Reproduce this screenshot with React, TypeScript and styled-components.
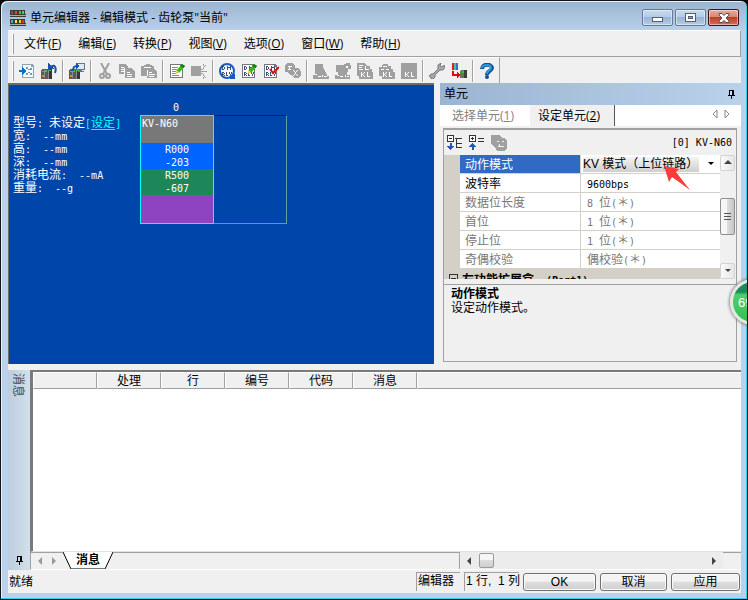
import React from "react";
import styled, { createGlobalStyle, css } from "styled-components";

const UI = `"Open Sans", "Noto Sans CJK SC", sans-serif`;
const CJK = `"Noto Sans CJK SC", sans-serif`;
const MONO = `"DejaVu Sans Mono", "Noto Sans CJK SC", monospace`;

const GlobalStyle = createGlobalStyle`
  * { box-sizing: border-box; }
  body { margin: 0; background: #000; }
  button, select { font: inherit; color: inherit; border: 0; padding: 0; margin: 0; background: none; }
`;

/* ---------- window frame ---------- */

const Window = styled.div`
  position: relative;
  display: flex;
  flex-direction: column;
  min-height: 100vh;
  padding: 0 6px 6px 7px;
  overflow: hidden;
  border: 1px solid #10131a;
  border-radius: 7px 7px 0 0;
  background: linear-gradient(#9ab4d1 0, #b9d1ea 30px, #b9d1ea 100%);
  box-shadow: inset -1px -1px 0 #2fd0ea, inset 1px 1px 0 #e9f3fc;
  font-family: ${UI};
  font-size: 12px;
  line-height: 16px;
  color: #000;
`;

const TitleBar = styled.header`
  display: flex;
  align-items: center;
  height: 29px;
  padding: 4px 2px 0 2px;
  gap: 4px;
`;

const Title = styled.h1`
  flex: 1;
  margin: 0;
  font-size: 12px;
  font-weight: 400;
  line-height: 18px;
`;

const CaptionButtons = styled.div`
  display: flex;
  gap: 2px;
`;

const CaptionButton = styled.button<{ $close?: boolean }>`
  display: grid;
  place-items: center;
  width: 31px;
  height: 17px;
  border: 1px solid ${(p) => (p.$close ? "#43131b" : "#64789a")};
  border-radius: 2px;
  background: ${(p) =>
    p.$close
      ? "linear-gradient(#e9a99c 0, #d98877 45%, #bd3f27 50%, #d0705a 100%)"
      : "linear-gradient(#c6d9ed 0, #b6cde5 45%, #98b4d3 50%, #b3cde8 100%)"};
  box-shadow: inset 0 0 0 1px rgba(255, 255, 255, 0.45);
`;

const Client = styled.div`
  flex: 1;
  display: flex;
  flex-direction: column;
  background: #f0f0f0;
`;

/* ---------- menu and toolbar ---------- */

const MenuBar = styled.nav`
  display: flex;
  align-items: center;
  height: 27px;
  padding-left: 4px;
  gap: 17px;
  border-top: 1px solid #fff;
  border-right: 1px solid #a0a0a0;
  border-bottom: 1px solid #a0a0a0;
`;

const Grip = styled.span`
  width: 2px;
  height: 20px;
  border-right: 1px solid #a0a0a0;
  border-left: 1px solid #fff;
`;

const MenuItem = styled.button`
  line-height: 18px;
  white-space: nowrap;
  &:first-of-type { margin-left: -7px; }
`;

const ToolBar = styled.div`
  display: flex;
  align-items: center;
  align-self: flex-start;
  height: 26px;
  padding: 0 1px 0 4px;
  border-top: 1px solid #fff;
  border-right: 1px solid #a0a0a0;
`;

const ToolGrip = styled(Grip)`
  margin-right: 2px;
`;

const ToolButton = styled.button`
  display: grid;
  place-items: center;
  width: 22px;
  height: 22px;
`;

const ToolSeparator = styled.span`
  width: 2px;
  height: 22px;
  margin: 0 2px;
  border-left: 1px solid #a0a0a0;
  border-right: 1px solid #fff;
`;

/* ---------- unit canvas ---------- */

const Work = styled.div`
  display: flex;
  gap: 6px;
`;

const Canvas = styled.section`
  flex: 1;
  display: flex;
  align-items: flex-start;
  gap: 19px;
  padding: 16px 4px;
  border-top: 2px solid #6d6d6d;
  border-left: 1px solid #6d6d6d;
  background: #0046aa;
  color: #fff;
`;

const Specs = styled.div`
  width: 108px;
  padding-top: 14px;
  font-family: ${CJK};
  line-height: 13px;
  white-space: pre;
`;

const SpecLine = styled.div`
  height: 13px;
`;

const Small = styled.span`
  font-family: ${MONO};
  font-size: 10px;
  line-height: 10px;
`;

const SpecLink = styled.a`
  color: #0ff;
  text-underline-offset: 2px;
`;

const Rack = styled.div`
  flex: 0 1 147px;
  font-family: ${MONO};
  font-size: 10px;
  line-height: 13px;
`;

const SlotNumber = styled.div`
  width: 72px;
  height: 14px;
  text-align: center;
`;

const Slots = styled.div`
  display: flex;
  height: 109px;
`;

const UnitSlot = styled.div`
  display: flex;
  flex-direction: column;
  width: 74px;
  border: 1px solid #0ff;
`;

const EmptySlot = styled.div`
  flex: 1;
  border: solid #5f9ea0;
  border-width: 1px 1px 1px 0;
  border-top-color: #222;
`;

const UnitBlock = styled.div<{ $bg: string; $size: number; $left?: boolean }>`
  height: ${(p) => p.$size}px;
  padding: ${(p) => (p.$left ? "1px" : "0")};
  text-align: ${(p) => (p.$left ? "left" : "center")};
  background: ${(p) => p.$bg};
`;

/* ---------- unit pane ---------- */

const Pane = styled.aside`
  width: 301px;
  display: flex;
  flex-direction: column;
  padding-bottom: 2px;
`;

const PaneHeader = styled.h2`
  display: flex;
  align-items: center;
  justify-content: space-between;
  height: 22px;
  margin: 0;
  padding: 0 6px 0 4px;
  background: linear-gradient(90deg, #9ab4d2, #b9d1ea);
  font-size: 12px;
  font-weight: 400;
`;

const TabRow = styled.div`
  display: flex;
  height: 21px;
  background: #fff;
`;

const Tab = styled.button<{ $active?: boolean }>`
  width: ${(p) => (p.$active ? 85 : 90)}px;
  padding-right: ${(p) => (p.$active ? 6 : 4)}px;
  color: ${(p) => (p.$active ? "#000" : "#808080")};
  ${(p) =>
    p.$active &&
    css`
      background: #f0f0f0;
      border-right: 1px solid #555;
    `}
`;

const TabArrows = styled.div`
  display: flex;
  flex: 1;
  align-items: center;
  justify-content: flex-end;
  gap: 2px;
  padding: 0 9px 4px 0;
`;

const ArrowButton = styled.button`
  display: grid;
  place-items: center;
  width: 10px;
  height: 12px;
`;

const PaneBody = styled.div`
  flex: 1;
  display: flex;
  flex-direction: column;
  margin: 2px 4px 0 3px;
  border: 1px solid #a0a0a0;
  border-top: 2px solid #a0a0a0;
`;

const PaneTools = styled.div`
  display: flex;
  align-items: center;
  height: 25px;
  padding: 0 4px 0 0;
`;

const UnitName = styled.span`
  margin-left: auto;
  font-family: ${MONO};
  font-size: 10px;
`;

const GridArea = styled.div`
  display: flex;
  height: 124px;
`;

const GridClip = styled.div`
  flex: 1;
  overflow: hidden;
  padding-left: 16px;
  background: #d4d0c8;
`;

const PropTable = styled.table`
  width: 100%;
  table-layout: fixed;
  border-collapse: separate;
  border-spacing: 0;
  font-family: ${CJK};
`;

const PropRow = styled.tr<{ $muted?: boolean }>`
  height: 19px;
  background: #fff;
  color: ${(p) => (p.$muted ? "#787878" : "#000")};
`;

const PropName = styled.th<{ $selected?: boolean }>`
  width: 121px;
  height: 19px;
  padding: 0 0 0 5px;
  border-right: 1px solid #d4d0c8;
  border-bottom: 1px solid #d4d0c8;
  font-weight: 400;
  text-align: left;
  line-height: 16px;
  ${(p) =>
    p.$selected &&
    css`
      background: #316ac5;
      color: #fff;
    `}
`;

const PropValue = styled.td<{ $editing?: boolean }>`
  height: 19px;
  padding: ${(p) => (p.$editing ? "0 0 0 2px" : "0 0 0 6px")};
  border-bottom: 1px solid #d4d0c8;
  line-height: 16px;
  white-space: pre;
`;

const SelectBox = styled.label`
  display: flex;
  align-items: center;
  justify-content: space-between;
  padding-right: 5px;
`;

const ModeSelect = styled.select`
  appearance: none;
  width: 116px;
  height: 15px;
  background: linear-gradient(#f4f4f4, #cfcfcf);
  font-family: "Liberation Sans", "Noto Sans CJK SC", sans-serif;
  font-size: 12px;
  line-height: 15px;
`;

const Category = styled.div`
  display: flex;
  align-items: center;
  gap: 4px;
  height: 19px;
  margin-left: -11px;
  font-family: ${CJK};
  font-weight: 700;
  white-space: pre;
`;

const VScroll = styled.div`
  display: flex;
  flex-direction: column;
  width: 16px;
  background: #f0f0f0;
`;

const ScrollButton = styled.button`
  display: grid;
  place-items: center;
  width: 15px;
  height: 16px;
  border: 1px solid #d2d2d2;
  border-radius: 2px;
  background: linear-gradient(90deg, #fafafa, #e6e6e6);
`;

const VThumb = styled.div`
  display: grid;
  place-items: center;
  width: 15px;
  height: 37px;
  margin: 27px 0 auto;
  border: 1px solid #8e8e8e;
  border-radius: 2px;
  background: linear-gradient(90deg, #f6f6f6 0 45%, #dcdcdc 50%, #c6c6c6);
`;

const Description = styled.div`
  flex: 1;
  min-height: 77px;
  margin-top: 5px;
  padding: 1px 7px;
  border-top: 1px solid #a0a0a0;
  font-family: ${CJK};
  line-height: 14px;
`;

const DescriptionTitle = styled.strong`
  display: block;
`;

/* ---------- message list ---------- */

const Messages = styled.section`
  flex: 1;
  display: flex;
  margin-top: 6px;
`;

const SideStrip = styled.div`
  display: flex;
  flex-direction: column;
  align-items: center;
  justify-content: space-between;
  width: 22px;
  padding: 3px 0 5px;
  background: linear-gradient(90deg, #bccddf, #d3dfeb);
  color: #404a58;
`;

const SideTitle = styled.span`
  writing-mode: vertical-rl;
  text-orientation: sideways;
  font-family: ${CJK};
`;

const MessagePane = styled.div`
  flex: 1;
  display: flex;
  flex-direction: column;
  border-top: 2px solid #7a7a7a;
`;

const MessageList = styled.div`
  flex: 1;
  background: #fff;
  border-left: 3px solid #7a7a7a;
  border-bottom: 1px solid #e3e3e3;
`;

const MessageTable = styled.table`
  width: 100%;
  table-layout: fixed;
  border-collapse: separate;
  border-spacing: 0;
  font-family: ${CJK};
`;

const HeadCell = styled.th<{ $rest?: boolean }>`
  width: ${(p) => (p.$rest ? "auto" : "64px")};
  height: 17px;
  padding: 0 0 1px;
  background: #f0f0f0;
  border-top: 1px solid #fff;
  border-left: 1px solid #fff;
  border-bottom: 1px solid #a0a0a0;
  border-right: ${(p) => (p.$rest ? 0 : 1)}px solid #a0a0a0;
  font-weight: 400;
  line-height: 14px;
`;

const SheetBar = styled.div`
  display: flex;
  height: 18px;
  border-left: 1px solid #a0a0a0;
  border-bottom: 1px solid #fff;
`;

const SheetNav = styled.div`
  display: flex;
  align-items: center;
  gap: 4px;
  width: 32px;
  padding-left: 4px;
  border-top: 1px solid #a0a0a0;
`;

const SheetTab = styled.button`
  display: flex;
  height: 17px;
`;

const SheetLabel = styled.span`
  width: 34px;
  height: 17px;
  background: #fff;
  border-bottom: 1px solid #777;
  font-family: ${CJK};
  font-weight: 700;
  line-height: 14px;
`;

const SheetFill = styled.div`
  flex: 1;
  border-top: 1px solid #a0a0a0;
  border-right: 1px solid #a0a0a0;
`;

const HScroll = styled.div`
  display: flex;
  align-items: center;
  width: 262px;
  margin-left: 1px;
  padding: 0 4px 0 3px;
  background: #ececec;
`;

const HThumb = styled.div`
  width: 15px;
  height: 15px;
  margin: 0 auto 0 5px;
  border: 1px solid #9a9a9a;
  border-radius: 2px;
  background: linear-gradient(#f6f6f6 0 45%, #dcdcdc 50%, #cfcfcf);
`;

const SheetEnd = styled.div`
  width: 18px;
  border-top: 1px solid #a0a0a0;
`;

/* ---------- status bar ---------- */

const StatusBar = styled.footer`
  display: flex;
  align-items: center;
  gap: 4px;
  height: 23px;
  padding: 0 1px;
  font-family: "Liberation Sans", "Noto Sans CJK SC", sans-serif;
`;

const StatusText = styled.span`
  flex: 1;
`;

const StatusCell = styled.span<{ $width: number }>`
  width: ${(p) => p.$width}px;
  height: 19px;
  padding-left: 1px;
  border-top: 1px solid #a0a0a0;
  border-left: 1px solid #a0a0a0;
  line-height: 17px;
  white-space: pre;
`;

const PushButton = styled.button<{ $width: number }>`
  width: ${(p) => p.$width}px;
  height: 18px;
  border: 1px solid #707070;
  border-radius: 3px;
  background: linear-gradient(#f3f3f3 0 45%, #dedede 50%, #cfcfcf);
  box-shadow: inset 0 0 0 1px #fafafa;
  line-height: 14px;
`;

/* ---------- overlays ---------- */

const Pointer = styled.svg`
  position: absolute;
  top: 165px;
  right: 55px;
`;

const Badge = styled.div`
  position: absolute;
  top: 278px;
  right: -29px;
  width: 46px;
  height: 46px;
  padding: 13px 0 0 5px;
  border: 3px solid #e4e8e4;
  border-radius: 50%;
  background: linear-gradient(#1d8a5c 0 25%, #4fd069 32%, #35bd55);
  box-shadow: 0 0 3px 1px #888;
  color: #fff;
  font-family: "Liberation Sans", sans-serif;
  font-size: 13px;
  line-height: 15px;
`;

/* ---------- icons ---------- */

const Icon = ({ children, w = 16, h = 16 }: { children: React.ReactNode; w?: number; h?: number }) => (
  <svg width={w} height={h} viewBox={`0 0 ${w} ${h}`} fill="none" shapeRendering="crispEdges" aria-hidden="true">
    {children}
  </svg>
);

const PlcBody = () => (
  <>
    <path d="M0 7l1-1h10v9l-1 1H0z" fill="#5a5a5a" />
    <path d="M3 7h1v8H3zM7 7h1v9H7z" fill="#8c8c8c" />
    <path d="M8 6h3v9l-1 1H8z" fill="#363636" />
    <path d="M1 8h2v1H1zM4 7h2v2H4zM8 7h2v1H8z" fill="#2fd02f" />
    <path d="M1 12h2v2H1z" fill="#e88419" />
  </>
);

/** Two rows of tiny device-name marks, "DM" over "RLY". */
const DeviceMarks = () => (
  <path
    d="M3 3h1v4H3zM4 3h1v1H4zM4 6h1v1H4zM5 4h1v2H5zM8 3h1v4H8zM9 4h1v1H9zM10 4h1v1h-1zM11 3h1v4h-1zM3 9h1v4H3zM4 9h1v1H4zM5 10h1v1H5zM4 11h1v1H4zM5 12h1v1H5zM7 9h1v4H7zM8 12h1v1H8zM10 9h1v2h-1zM12 9h1v2h-1zM11 11h1v2h-1z"
    fill="#3c5078"
  />
);

const Sheet = () => (
  <>
    <path d="M1 1h11l2 2v12H1z" fill="#777" />
    <path d="M2 2h9v2h2v10H2z" fill="#fff" />
  </>
);

const Pencil = () => (
  <g shapeRendering="auto">
    <path d="M7.500 7.500L13 1l3 2-5.500 6.500z" fill="#35b51f" />
    <path d="M13 1l3 2-1.500 2-3-2z" fill="#157a12" />
    <path d="M7.500 7.500l3 2L6.500 11z" fill="#e8c840" />
  </g>
);

const G = "#a0a0a0";

const KlPanel = ({ variant }: { variant: number }) => (
  <Icon>
    {variant === 0 && (
      <>
        <path d="M2 1h8v4h1v2h1v2h1v2h1v2h2v3H0v-4h2z" fill={G} />
        <path d="M2 11h2v1H2zM5 13h3v1H5zM9 12h1v2H9zM11 13h3v1h-3z" fill="#fff" />
      </>
    )}
    {variant === 1 && (
      <>
        <path d="M1 2h8V1h2V0h4v2h1v4h-3v3h-1v3h3v4H0v-4h3V9H1z" fill={G} />
        <path d="M11 3h2v2h-2zM2 12h2v1H2zM5 13h3v1H5zM10 12h1v2h-1zM12 13h2v1h-2z" fill="#fff" />
      </>
    )}
    {variant === 2 && <path d="M0 0h8l2 3h3v3h2v3h1v7H2v-3H0z" fill={G} />}
    {variant === 3 && <path d="M4 1h5v2h3v3h2v3h2v7H3v-3H0V4h3z" fill={G} />}
    {variant === 4 && <path d="M0 0h16v16H0z" fill={G} />}
    {variant > 1 && (
      <path
        d="M4 9h1v5H4zM5 11h1v1H5zM6 10h1v1H6zM7 9h1v1H7zM6 12h1v1H6zM7 13h1v1H7zM10 9h1v5h-1zM11 13h2v1h-2z"
        fill="#fff"
      />
    )}
    {variant === 2 && <path d="M2 2h4v1H2zM2 4h3v1H2zM2 6h4v1H2zM8 3h1v4H8zM9 6h3v1H9z" fill="#fff" />}
    {variant === 3 && <path d="M4 3h4v1H4zM2 6h3v1H2zM7 6h3v1H7z" fill="#fff" />}
  </Icon>
);

const tools: Array<Array<[string, React.ReactNode]>> = [
  [
    [
      "导入",
      <Icon>
        <path d="M3 1h10l2 2v12H3z" fill="#8ba3b2" />
        <path d="M4 2h8v2h2v10H4z" fill="#f4f9fc" />
        <path d="M7 4h2v2H7zM11 5h2v2h-2zM7 10h2v2H7zM11 10h2v2h-2zM9 6h2v1H9zM9 9h2v1H9z" fill="#7d95a4" />
        <path d="M0 7h3V4h1v1h1v1h1v1h1v2H6v1H5v1H4v1H3V9H0z" fill="#0870c4" />
      </Icon>,
    ],
    [
      "撤消",
      <Icon>
        <PlcBody />
        <path d="M10 4c3-3 6 0 4 6" stroke="#1552a8" strokeWidth="2" shapeRendering="auto" />
        <path d="M7 0v6h6z" fill="#1552a8" />
      </Icon>,
    ],
  ],
  [
    [
      "传送",
      <Icon>
        <PlcBody />
        <path d="M7 0h9v7H7z" fill="#657488" />
        <path d="M8 1h7v5H8z" fill="#dcecf6" />
        <path d="M10 7h3v1h-3zM9 8h6v1H9z" fill="#657488" />
        <path d="M4 8c0-4 1-5 4-5" stroke="#1552a8" strokeWidth="2" shapeRendering="auto" />
        <path d="M7 0l4 3-4 3z" fill="#1552a8" />
      </Icon>,
    ],
  ],
  [
    [
      "剪切",
      <Icon>
        <g stroke={G} strokeWidth="2" shapeRendering="auto">
          <path d="M4 0l6 11M12 0L6 11" />
          <circle cx="5" cy="13" r="2" />
          <circle cx="11" cy="13" r="2" />
        </g>
      </Icon>,
    ],
    [
      "复制",
      <Icon>
        <path d="M0 1h6l3 3v7H0zM6 5h6l4 4v6H6z" fill={G} />
        <path d="M2 4h3v1H2zM2 6h3v1H2zM2 8h3v1H2zM8 9h3v1H8zM8 11h5v1H8zM8 13h5v1H8zM5 5h1v6H5z" fill="#fff" />
      </Icon>,
    ],
    [
      "粘贴",
      <Icon>
        <path d="M0 3h3V2h2V1h4v1h2v1h2v3l3 3v6H6v-2H0z" fill={G} />
        <path d="M3 4h7v1H3zM6 7h1v6H6zM8 9h3v1H8zM8 11h6v1H8zM8 13h5v1H8z" fill="#fff" />
      </Icon>,
    ],
  ],
  [
    [
      "编辑",
      <Icon>
        <Sheet />
        <path d="M3 4h6v1H3zM3 6h5v1H3zM3 8h4v1H3zM3 10h4v1H3zM3 12h7v1H3z" fill="#8a8a8a" />
        <Pencil />
      </Icon>,
    ],
    [
      "展开",
      <Icon>
        <path d="M0 3h10v10H0z" fill={G} />
        <path
          d="M10 8h6v1h-6zM10 6h2v1h-2zM12 4h1v2h-1zM13 3h1v1h-1zM14 2h1v1h-1zM10 10h2v1h-2zM12 11h1v2h-1zM13 13h1v1h-1zM14 14h1v1h-1zM12 1h1v2h-1zM12 14h1v2h-1z"
          fill={G}
        />
      </Icon>,
    ],
  ],
  [
    [
      "软元件刷新",
      <Icon>
        <circle cx="8" cy="8" r="7" stroke="#1858c8" strokeWidth="2" fill="#f4f6fa" shapeRendering="auto" />
        <DeviceMarks />
        <path d="M10 16h6v-6z" fill="#1858c8" />
      </Icon>,
    ],
    [
      "软元件编辑",
      <Icon>
        <Sheet />
        <DeviceMarks />
        <Pencil />
      </Icon>,
    ],
    [
      "软元件检查",
      <Icon>
        <Sheet />
        <DeviceMarks />
        <path d="M7 6l3 4 6-6" stroke="#e00808" strokeWidth="2" shapeRendering="auto" />
      </Icon>,
    ],
    [
      "软元件清除",
      <Icon>
        <path d="M2 0h6l2 3v2h3l2 2v1h1v4l-3 3H9l-2-3H5L2 9H0V3z" fill={G} />
        <path d="M3 3h4v1H3zM3 6h3v1H3zM4 4h1v2H4zM8 7h1v1H8zM9 8h1v1H9zM10 9h1v2h-1zM11 8h1v1h-1zM12 7h1v1h-1zM9 11h1v1H9zM11 11h1v1h-1zM8 12h1v1H8zM12 12h1v1h-1z" fill="#fff" />
      </Icon>,
    ],
  ],
  [
    ["监视", <KlPanel variant={0} />],
    ["监视切换", <KlPanel variant={1} />],
    ["KL 读取", <KlPanel variant={2} />],
    ["KL 传送", <KlPanel variant={3} />],
    ["KL", <KlPanel variant={4} />],
  ],
  [
    [
      "设置",
      <Icon>
        <g shapeRendering="auto">
          <path
            d="M12 0L9 2v4l-5 5H2l-2 2 2 1v2h2l2-2v-2l5-5h3l2-3-1-2-2 2-2-1z"
            fill="#a8a8b0"
            stroke="#77777f"
          />
        </g>
      </Icon>,
    ],
    [
      "配线",
      <Icon>
        <path d="M1 0h2v7H1z" fill="#e02020" />
        <path d="M3 0h2v7H3z" fill="#38c8a8" />
        <path d="M5 0h2v7H5z" fill="#4468c0" />
        <path d="M1 8h2v3h3V9h1v1h1v1h1v2H8v1H7v1H6v-2H1z" fill="#e00808" />
        <path d="M9 8l1-1h6v8H9z" fill="#6a7460" />
        <path d="M13 7h3v8h-3z" fill="#3a4434" />
        <path d="M11 8h2v2h-2z" fill="#2bd32b" />
      </Icon>,
    ],
  ],
  [
    [
      "帮助",
      <Icon>
        <g shapeRendering="auto">
          <path d="M3 6c0-6 10-5 10-1 0 3-5 3-5 7" stroke="#124d94" strokeWidth="4" />
          <path d="M3 5c1-4 9-4 9 0 0 2-4 3-4 6" stroke="#319ad7" strokeWidth="2" />
          <circle cx="8" cy="14" r="2" fill="#124d94" />
        </g>
      </Icon>,
    ],
  ],
];

const AppIcon = () => (
  <Icon>
    {[0, 9].map((y) => (
      <g key={y}>
        <path d={`M0 ${y}h15v4h1v3H0z`} fill="#3b3b3b" />
        <path d={`M0 ${y + 5}h16v1H0z`} fill="#aaa" />
        <path d={`M1 ${y + 1}h2v3H1z`} fill={y ? "#22c6a8" : "#e02a1a"} />
        <path d={`M5 ${y + 1}h2v3H5z`} fill={y ? "#f4e850" : "#e84820"} />
        <path d={`M9 ${y + 1}h2v3H9z`} fill={y ? "#f0d820" : "#30cc40"} />
        <path d={`M12 ${y + 1}h2v3h-2z`} fill={y ? "#e83020" : "#30e050"} />
      </g>
    ))}
  </Icon>
);

const PinIcon = () => (
  <Icon w={7} h={9}>
    <path d="M1 0h5v5h1v1H4v3H3V6H0V5h1z" fill="#000" />
    <path d="M2 1h2v4H2z" fill="#d0dcea" />
  </Icon>
);

const Triangle = ({ dir, color = "#444", hollow }: { dir: "l" | "r" | "u" | "d"; color?: string; hollow?: boolean }) => {
  const d = { l: "M6 1v8L2 5z", r: "M2 1v8l4-4z", u: "M0 6h8L4 2z", d: "M1 3h6L4 6z" }[dir];
  return (
    <svg width="8" height="10" viewBox="0 0 8 10" aria-hidden="true">
      <path d={d} fill={hollow ? "none" : color} stroke={hollow ? color : "none"} />
    </svg>
  );
};

const TreeIcon = ({ expand }: { expand?: boolean }) => (
  <Icon>
    <path d="M0 0h7v7H0z" fill="#333" />
    <path d="M1 1h5v5H1z" fill="#fff" />
    <path d="M2 3h3v1H2z" fill="#222" />
    {expand ? (
      <path d="M3 2h1v3H3zM9 3h6v1H9zM9 6h6v1H9z" fill="#333" />
    ) : (
      <path d="M8 3h7v1H8zM9 4h1v9H9zM10 8h5v1h-5zM10 12h5v1h-5z" fill="#333" />
    )}
    <path
      d={expand ? "M3 8h1v1h1v1h1v1h1v1H5v3H3v-3H0v-1h1v-1h1V9h1z" : "M3 8h2v3h2v1H6v1H5v1H4v1H3v-1H2v-1H1v-1H0v-1h3z"}
      fill="#2458b8"
    />
  </Icon>
);

/* ---------- content ---------- */

/** Sets runs of half-width characters in the narrow monospace face. */
const Mixed = ({ text }: { text: string }) => (
  <>{text.split(/([\x20-\x7e]+)/).map((run, i) => (i % 2 ? <Small key={i}>{run}</Small> : run))}</>
);

const menus = [
  ["文件", "F"],
  ["编辑", "E"],
  ["转换", "P"],
  ["视图", "V"],
  ["选项", "O"],
  ["窗口", "W"],
  ["帮助", "H"],
];

const specs = ["宽:  --mm", "高:  --mm", "深:  --mm", "消耗电流:  --mA", "重量:  --g"];

const properties = [
  { name: "波特率", value: "9600bps" },
  { name: "数据位长度", value: "8 位(＊)", muted: true },
  { name: "首位", value: "1 位(＊)", muted: true },
  { name: "停止位", value: "1 位(＊)", muted: true },
  { name: "奇偶校验", value: "偶校验(＊)", muted: true },
];

export default function App() {
  return (
    <Window>
      <GlobalStyle />
      <TitleBar>
        <AppIcon />
        <Title>单元编辑器 - 编辑模式 - 齿轮泵"当前"</Title>
        <CaptionButtons>
          <CaptionButton aria-label="最小化">
            <Icon w={11} h={9}>
              <path d="M0 4h11v5H0z" fill="#555e70" />
              <path d="M1 5h9v3H1z" fill="#fff" />
            </Icon>
          </CaptionButton>
          <CaptionButton aria-label="最大化">
            <Icon w={11} h={9}>
              <path d="M0 0h11v9H0z" fill="#555e70" />
              <path d="M1 1h9v7H1z" fill="#fff" />
              <path d="M3 3h5v3H3z" fill="#555e70" />
              <path d="M4 4h3v1H4z" fill="#8ba6c8" />
            </Icon>
          </CaptionButton>
          <CaptionButton $close aria-label="关闭">
            <svg width="12" height="10" viewBox="0 0 12 10" aria-hidden="true">
              <path d="M1 .5h3l2 2 2-2h3v1.500L8 5l3 3v1.500H8l-2-2-2 2H1V8l3-3-3-3z" fill="#fff" stroke="#5a4550" />
            </svg>
          </CaptionButton>
        </CaptionButtons>
      </TitleBar>

      <Client>
        <MenuBar>
          <Grip />
          {menus.map(([label, key]) => (
            <MenuItem key={key}>
              {label}(<u>{key}</u>)
            </MenuItem>
          ))}
        </MenuBar>
        <ToolBar role="toolbar">
          <ToolGrip />
          {tools.map((group, i) => (
            <React.Fragment key={i}>
              {i > 0 && <ToolSeparator />}
              {group.map(([label, icon]) => (
                <ToolButton key={label} aria-label={label}>
                  {icon}
                </ToolButton>
              ))}
            </React.Fragment>
          ))}
        </ToolBar>

        <Work>
          <Canvas>
            <Specs>
              <SpecLine>
                <Mixed text="型号: 未设定" />
                <SpecLink as="span">
                  <Small>[</Small>
                </SpecLink>
                <SpecLink href="#model">设定</SpecLink>
                <SpecLink as="span">
                  <Small>]</Small>
                </SpecLink>
              </SpecLine>
              {specs.map((line) => (
                <SpecLine key={line}>
                  <Mixed text={line} />
                </SpecLine>
              ))}
            </Specs>
            <Rack>
              <SlotNumber>0</SlotNumber>
              <Slots>
                <UnitSlot>
                  <UnitBlock $bg="#787878" $size={27} $left>
                    KV-N60
                  </UnitBlock>
                  <UnitBlock $bg="#0064ff" $size={26}>
                    R000
                    <br />
                    -203
                  </UnitBlock>
                  <UnitBlock $bg="#1e8759" $size={26}>
                    R500
                    <br />
                    -607
                  </UnitBlock>
                  <UnitBlock $bg="#8e44c0" $size={28} />
                </UnitSlot>
                <EmptySlot />
              </Slots>
            </Rack>
          </Canvas>

          <Pane>
            <PaneHeader>
              单元
              <PinIcon />
            </PaneHeader>
            <TabRow>
              <Tab>
                选择单元(<u>1</u>)
              </Tab>
              <Tab $active>
                设定单元(<u>2</u>)
              </Tab>
              <TabArrows>
                <ArrowButton aria-label="上一个">
                  <Triangle dir="l" color="#888" hollow />
                </ArrowButton>
                <ArrowButton aria-label="下一个">
                  <Triangle dir="r" color="#888" hollow />
                </ArrowButton>
              </TabArrows>
            </TabRow>
            <PaneBody>
              <PaneTools>
                <ToolButton aria-label="全部折叠">
                  <TreeIcon />
                </ToolButton>
                <ToolButton aria-label="全部展开">
                  <TreeIcon expand />
                </ToolButton>
                <ToolButton aria-label="复制设定">
                  <Icon>
                    <path d="M0 0h9l2 3h3l2 3v7l-3 3H6l-2-4-4-3z" fill={G} />
                    <path d="M6 6h2v1H6zM11 6h2v1h-2zM7 11h6v1H7zM8 9h1v2H8z" fill="#f0f0f0" />
                  </Icon>
                </ToolButton>
                <UnitName>[0] KV-N60</UnitName>
              </PaneTools>
              <GridArea>
                <GridClip>
                  <PropTable>
                    <tbody>
                      <PropRow>
                        <PropName $selected scope="row">
                          动作模式
                        </PropName>
                        <PropValue $editing>
                          <SelectBox>
                            <ModeSelect aria-label="动作模式">
                              <option>KV 模式（上位链路）</option>
                            </ModeSelect>
                            <Triangle dir="d" color="#000" />
                          </SelectBox>
                        </PropValue>
                      </PropRow>
                      {properties.map((p) => (
                        <PropRow key={p.name} $muted={p.muted}>
                          <PropName scope="row">{p.name}</PropName>
                          <PropValue>
                            <Mixed text={p.value} />
                          </PropValue>
                        </PropRow>
                      ))}
                    </tbody>
                  </PropTable>
                  <Category>
                    <Icon w={9} h={9}>
                      <path d="M0 0h9v9H0z" fill="#333" />
                      <path d="M1 1h7v7H1z" fill="#d4d0c8" />
                      <path d="M2 4h5v1H2z" fill="#333" />
                    </Icon>
                    <span>
                      <Mixed text="左功能扩展盒  (Port1)" />
                    </span>
                  </Category>
                </GridClip>
                <VScroll>
                  <ScrollButton aria-label="向上滚动">
                    <Triangle dir="u" />
                  </ScrollButton>
                  <VThumb>
                    <Icon w={7} h={9}>
                      <path d="M0 1h7v1H0zM0 4h7v1H0zM0 7h7v1H0z" fill="#555" />
                    </Icon>
                  </VThumb>
                  <ScrollButton aria-label="向下滚动">
                    <Triangle dir="d" />
                  </ScrollButton>
                </VScroll>
              </GridArea>
              <Description>
                <DescriptionTitle>动作模式</DescriptionTitle>
                设定动作模式。
              </Description>
            </PaneBody>
          </Pane>
        </Work>

        <Messages>
          <SideStrip>
            <SideTitle>消息</SideTitle>
            <PinIcon />
          </SideStrip>
          <MessagePane>
            <MessageList>
              <MessageTable>
                <thead>
                  <tr>
                    {["", "处理", "行", "编号", "代码", "消息"].map((h) => (
                      <HeadCell key={h}>{h}</HeadCell>
                    ))}
                    <HeadCell $rest />
                  </tr>
                </thead>
              </MessageTable>
            </MessageList>
            <SheetBar>
              <SheetNav>
                <ArrowButton aria-label="上一页">
                  <Triangle dir="l" color="#999" />
                </ArrowButton>
                <ArrowButton aria-label="下一页">
                  <Triangle dir="r" color="#999" />
                </ArrowButton>
              </SheetNav>
              <SheetTab>
                <svg width="8" height="17" viewBox="0 0 8 17" aria-hidden="true">
                  <path d="M0 0h8v17z" fill="#fff" />
                  <path d="M0 0l8 17" stroke="#000" />
                </svg>
                <SheetLabel>消息</SheetLabel>
                <svg width="8" height="17" viewBox="0 0 8 17" aria-hidden="true">
                  <path d="M0 0h8L0 17z" fill="#fff" />
                  <path d="M8 0L0 17" stroke="#000" />
                </svg>
              </SheetTab>
              <SheetFill />
              <HScroll>
                <ArrowButton aria-label="向左滚动">
                  <Triangle dir="l" />
                </ArrowButton>
                <HThumb />
                <ArrowButton aria-label="向右滚动">
                  <Triangle dir="r" />
                </ArrowButton>
              </HScroll>
              <SheetEnd />
            </SheetBar>
          </MessagePane>
        </Messages>

        <StatusBar>
          <StatusText>就绪</StatusText>
          <StatusCell $width={44}>编辑器</StatusCell>
          <StatusCell $width={55}>1 行,  1 列</StatusCell>
          <PushButton $width={73}>OK</PushButton>
          <PushButton $width={67}>取消</PushButton>
          <PushButton $width={69}>应用</PushButton>
        </StatusBar>
      </Client>

      <Pointer width="28" height="27" viewBox="0 0 28 27" aria-hidden="true">
        <path d="M0 0l15 3-3 3 14 18-18-13-3 5z" fill="#fa3c3c" />
      </Pointer>
      <Badge>69</Badge>
    </Window>
  );
}
